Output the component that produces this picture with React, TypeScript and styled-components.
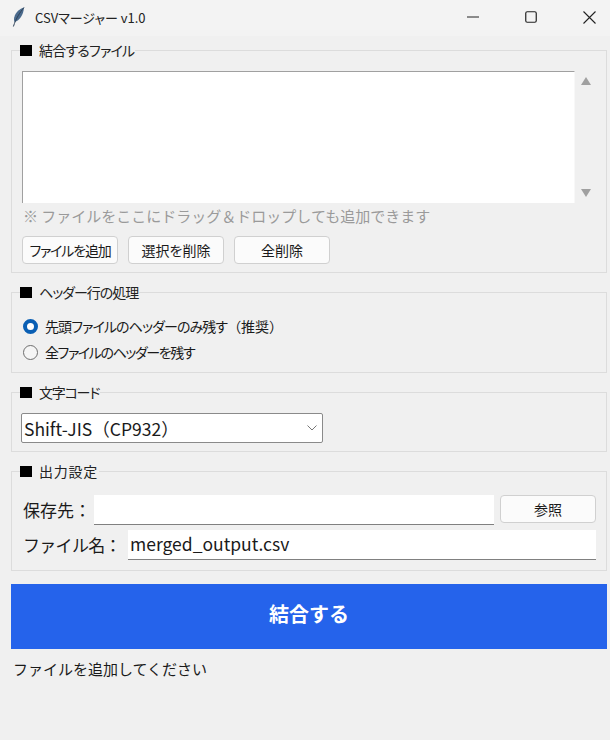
import React from 'react';
import styled, { createGlobalStyle } from 'styled-components';

const GlobalStyle = createGlobalStyle`
  html, body {
    margin: 0;
    padding: 0;
    background: #f0f0f0;
  }
  body {
    font-family: "Noto Sans CJK JP", "Liberation Sans", sans-serif;
    color: #1a1a1a;
  }
`;

const Window = styled.div`
  width: 610px;
  height: 740px;
  overflow: hidden;
  display: flex;
  flex-direction: column;
  background: #f0f0f0;
`;

const TitleBar = styled.header`
  box-sizing: border-box;
  height: 36px;
  flex: none;
  display: flex;
  align-items: center;
  background: #f3f3f3;
  padding: 0 0 2px 11px;
`;

const AppTitle = styled.span`
  margin-left: 10px;
  font-size: 13px;
  font-feature-settings: "palt";
  color: #222;
`;

const WindowControls = styled.div`
  margin-left: auto;
  margin-right: -9px;
  display: flex;
`;

const ControlButton = styled.button`
  width: 58.5px;
  height: 34px;
  padding: 0;
  border: 0;
  background: transparent;
  display: flex;
  align-items: center;
  justify-content: center;
`;

const Content = styled.main`
  display: flex;
  flex-direction: column;
  padding: 5px 3px 0 11px;
`;

const Group = styled.fieldset<{ $height: number; $gap?: number }>`
  box-sizing: border-box;
  height: ${(p) => p.$height}px;
  margin: 0 0 ${(p) => p.$gap ?? 10}px;
  padding: 0 10px;
  border: 1px solid #dcdcdc;
  min-width: 0;
`;

const Legend = styled.legend<{ $tracking: number }>`
  margin-left: -2px;
  padding: 0 1px 0 0;
  font-size: 14px;
  font-feature-settings: "palt";
  letter-spacing: ${(p) => p.$tracking}px;
  line-height: 18px;
  color: #222;
`;

const Square = styled.span`
  display: inline-block;
  width: 12px;
  height: 11px;
  background: #000;
  margin-right: 7px;
  vertical-align: 0;
`;

const ListRow = styled.div`
  display: flex;
  margin-top: 12px;
`;

const FileList = styled.div`
  box-sizing: border-box;
  width: 554px;
  height: 132px;
  background: #fff;
  border-top: 1px solid #a0a0a0;
  border-left: 1px solid #a0a0a0;
  border-right: 1px solid #f8f8f8;
`;

const ScrollTrack = styled.div`
  width: 21px;
  height: 132px;
  box-sizing: border-box;
  padding: 6px 0;
  display: flex;
  flex-direction: column;
  justify-content: space-between;
  align-items: center;
`;

const Arrow = styled.span<{ $down?: boolean }>`
  width: 0;
  height: 0;
  border-left: 5px solid transparent;
  border-right: 5px solid transparent;
  ${(p) => (p.$down ? 'border-top: 8px solid #a0a0a0;' : 'border-bottom: 8px solid #a0a0a0;')}
`;

const Hint = styled.p`
  margin: 3px 0 0 1px;
  font-size: 15px;
  line-height: 20px;
  color: #9a9a9a;
`;

const ButtonRow = styled.div`
  display: flex;
  gap: 10px;
  margin-top: 10px;
`;

const PushButton = styled.button<{ $tracking?: number }>`
  box-sizing: border-box;
  width: 96px;
  height: 28px;
  padding: 0;
  background: #fbfbfb;
  border: 1px solid #d0d0d0;
  border-radius: 4px;
  font-family: inherit;
  font-feature-settings: "palt";
  font-size: 14px;
  letter-spacing: ${(p) => p.$tracking ?? 0}px;
  color: #1a1a1a;
`;

const RadioList = styled.div`
  display: flex;
  flex-direction: column;
  gap: 6px;
  margin-top: 15px;
`;

const RadioRow = styled.label<{ $tracking: number }>`
  display: flex;
  align-items: center;
  height: 20px;
  font-size: 14px;
  font-feature-settings: "palt";
  letter-spacing: ${(p) => p.$tracking}px;
  color: #1a1a1a;
  margin-left: 1px;
`;

const RadioNote = styled.span`
  font-feature-settings: normal;
  letter-spacing: 0;
`;

const RadioDot = styled.span<{ $checked?: boolean }>`
  box-sizing: border-box;
  width: 15px;
  height: 15px;
  border-radius: 50%;
  margin-right: 7px;
  background: ${(p) => (p.$checked ? '#fff' : '#f5f5f5')};
  border: ${(p) => (p.$checked ? '4px solid #0a5fb4' : '1px solid #6e6e6e')};
`;

const SelectBox = styled.div`
  box-sizing: border-box;
  width: 302px;
  height: 30px;
  margin: 12px 0 0 -1px;
  display: flex;
  align-items: center;
  justify-content: space-between;
  padding: 0 5px 0 2px;
  background: #fff;
  border: 1px solid #8a8a8a;
  border-radius: 2px;
  font-size: 17.5px;
  color: #1a1a1a;
`;

const FormRow = styled.div`
  display: flex;
  align-items: flex-start;
  margin-top: 5px;
`;

const FirstFormRow = styled(FormRow)`
  margin-top: 15px;
`;

const FieldLabel = styled.label<{ $width: number; $tracking?: number }>`
  width: ${(p) => p.$width}px;
  flex: none;
  height: 30px;
  line-height: 29px;
  padding-left: 1px;
  box-sizing: border-box;
  font-size: 17px;
  letter-spacing: ${(p) => p.$tracking ?? 0}px;
  color: #1a1a1a;
`;

const TextField = styled.div`
  box-sizing: border-box;
  flex: 1;
  height: 30px;
  padding-left: 2px;
  background: #fff;
  border-bottom: 1px solid #808080;
  font-size: 17.5px;
  line-height: 28px;
  color: #1a1a1a;
`;

const BrowseButton = styled(PushButton)`
  margin-left: 6px;
  flex: none;
`;

const MergeButton = styled.button`
  width: 596px;
  height: 65px;
  margin-top: 1px;
  padding: 0 0 7px;
  border: 0;
  background: #2563eb;
  color: #fff;
  font-family: inherit;
  font-size: 20px;
  font-weight: 700;
`;

const Status = styled.p`
  margin: 9px 0 0 2px;
  font-size: 15px;
  line-height: 22px;
  color: #1a1a1a;
`;

const FeatherIcon = () => (
  <svg width="14" height="20" viewBox="0 0 14 20">
    <path d="M13 0.5C9 1.5 4.5 5 3.2 10.5 2.8 12.5 3 14 3.6 15 8.5 13.5 12.5 8 13 0.5Z" fill="#4a6a8c" />
    <path d="M13 0.5C9 5.5 5 11 2.4 19.5" fill="none" stroke="#2f4258" strokeWidth="1" />
  </svg>
);

const App: React.FC = () => (
  <Window>
    <GlobalStyle />
    <TitleBar>
      <FeatherIcon />
      <AppTitle>CSVマージャー v1.0</AppTitle>
      <WindowControls>
        <ControlButton aria-label="最小化">
          <svg width="12" height="2" viewBox="0 0 12 2"><path d="M0 1H12" stroke="#222" strokeWidth="1" /></svg>
        </ControlButton>
        <ControlButton aria-label="最大化">
          <svg width="12" height="12" viewBox="0 0 12 12"><rect x="0.75" y="0.75" width="10.5" height="10.5" rx="1.5" fill="none" stroke="#222" strokeWidth="1.2" /></svg>
        </ControlButton>
        <ControlButton aria-label="閉じる">
          <svg width="13" height="13" viewBox="0 0 13 13"><path d="M0.5 0.5L12.5 12.5M12.5 0.5L0.5 12.5" stroke="#222" strokeWidth="1.1" /></svg>
        </ControlButton>
      </WindowControls>
    </TitleBar>
    <Content>
      <Group $height={232}>
        <Legend $tracking={-0.8}><Square />結合するファイル</Legend>
        <ListRow>
          <FileList />
          <ScrollTrack>
            <Arrow />
            <Arrow $down />
          </ScrollTrack>
        </ListRow>
        <Hint>※ ファイルをここにドラッグ＆ドロップしても追加できます</Hint>
        <ButtonRow>
          <PushButton $tracking={-1.2}>ファイルを追加</PushButton>
          <PushButton>選択を削除</PushButton>
          <PushButton>全削除</PushButton>
        </ButtonRow>
      </Group>
      <Group $height={90}>
        <Legend $tracking={-1}><Square />ヘッダー行の処理</Legend>
        <RadioList>
          <RadioRow $tracking={-0.9}><RadioDot $checked />先頭ファイルのヘッダーのみ残す<RadioNote>（推奨）</RadioNote></RadioRow>
          <RadioRow $tracking={-1.4}><RadioDot />全ファイルのヘッダーを残す</RadioRow>
        </RadioList>
      </Group>
      <Group $height={69}>
        <Legend $tracking={-1.2}><Square />文字コード</Legend>
        <SelectBox>
          <span>Shift-JIS（CP932）</span>
          <svg width="10" height="6" viewBox="0 0 10 6"><path d="M0.5 0.5L5 5L9.5 0.5" fill="none" stroke="#777" strokeWidth="1" /></svg>
        </SelectBox>
      </Group>
      <Group $height={109} $gap={12}>
        <Legend $tracking={0.75}><Square />出力設定</Legend>
        <FirstFormRow>
          <FieldLabel $width={72}>保存先：</FieldLabel>
          <TextField />
          <BrowseButton>参照</BrowseButton>
        </FirstFormRow>
        <FormRow>
          <FieldLabel $width={106} $tracking={-0.7}>ファイル名：</FieldLabel>
          <TextField>merged_output.csv</TextField>
        </FormRow>
      </Group>
      <MergeButton>結合する</MergeButton>
      <Status>ファイルを追加してください</Status>
    </Content>
  </Window>
);

export default App;
